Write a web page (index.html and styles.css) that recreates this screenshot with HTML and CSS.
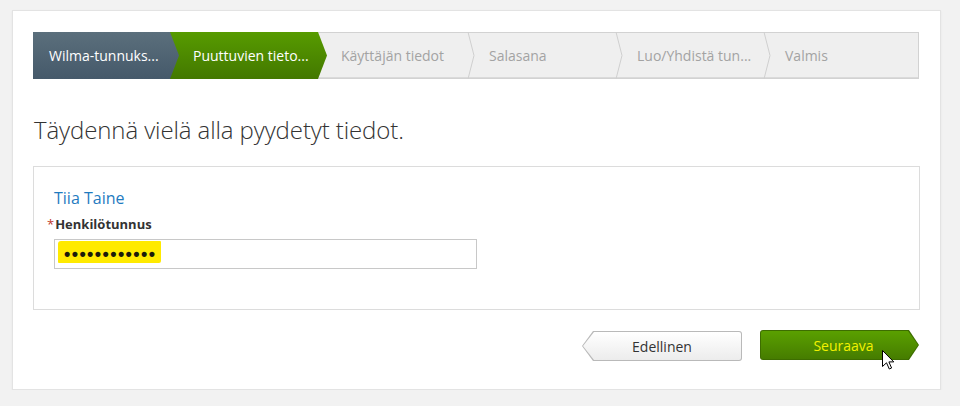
FILE: index.html
```html
<!DOCTYPE html>
<html>
<head>
  <title>Wilma-tunnukset</title>
  <meta name="viewport" content="width=device-width, initial-scale=1.0">
  <link rel="stylesheet" href="styles.css">
</head>
<body>
  <div class="card">
    <div class="stepper">
      <div class="step step-done">Wilma-tunnuks...</div>
      <div class="step step-active">Puuttuvien tieto...</div>
      <div class="step step-todo">
        <span>Käyttäjän tiedot</span>
        <svg class="sep" viewBox="0 0 8 47"><polyline points="1,0 7,23.5 1,47" /></svg>
      </div>
      <div class="step step-todo">
        <span>Salasana</span>
        <svg class="sep" viewBox="0 0 8 47"><polyline points="1,0 7,23.5 1,47" /></svg>
      </div>
      <div class="step step-todo">
        <span>Luo/Yhdistä tun...</span>
        <svg class="sep" viewBox="0 0 8 47"><polyline points="1,0 7,23.5 1,47" /></svg>
      </div>
      <div class="step step-todo step-last">
        <span>Valmis</span>
      </div>
    </div>

    <h1 class="title">Täydennä vielä alla pyydetyt tiedot.</h1>

    <div class="panel">
      <h3 class="person">Tiia Taine</h3>
      <label class="field-label"><span class="req">*</span>Henkilötunnus</label>
      <div class="field">
        <span class="mark">••••••••••••</span>
      </div>
    </div>

    <div class="actions">
      <a class="btn-prev"><span class="btn-face">Edellinen</span></a>
      <a class="btn-next"><span class="btn-face">Seuraava</span></a>
      <!-- mouse pointer over the next button -->
      <svg class="cursor" viewBox="0 0 13 20" width="13" height="20">
        <path d="M0.5,0.5 L0.5,16.5 L4.5,12.8 L7.3,19 L9.6,18 L6.9,11.9 L11.8,11.9 Z" />
      </svg>
    </div>
  </div>
</body>
</html>
```

FILE: styles.css
```css
body {
  margin: 0;
  padding: 10px 19px 0 12px;
  background: #f2f2f2;
  font-family: "Open Sans", "Liberation Sans", sans-serif;
  color: #333;
}

.card {
  background: #fff;
  border: 1px solid #e3e3e3;
  box-shadow: 0 1px 2px rgba(0, 0, 0, 0.06);
  padding: 21px 20px 28px 20px;
  height: 380px;
  box-sizing: border-box;
}

/* wizard steps */
.stepper {
  display: flex;
  height: 47px;
  margin-right: 1px;
  background: #efefef;
  box-shadow: inset 0 0 0 1px #d2d2d2, inset 0 -2px 0 #dadada;
  font-size: 14px;
}

.step {
  display: flex;
  align-items: center;
  box-sizing: border-box;
  white-space: nowrap;
  position: relative;
}

.step-done {
  flex: 0 0 146px;
  padding-left: 16px;
  color: #fff;
  background: linear-gradient(#5b6f7c, #45596a);
  clip-path: polygon(0 0, calc(100% - 9px) 0, 100% 50%, calc(100% - 9px) 100%, 0 100%);
  z-index: 3;
}

.step-active {
  flex: 0 0 157px;
  margin-left: -9px;
  padding-left: 23px;
  color: #fff;
  background: linear-gradient(#579b00, #437800);
  clip-path: polygon(0 0, calc(100% - 9px) 0, 100% 50%, calc(100% - 9px) 100%, 0 100%);
  z-index: 2;
}

.step-todo {
  flex: 0 0 148px;
  padding-left: 14px;
  color: #a3a3a3;
}

.step-last {
  flex: 1;
}

.sep {
  margin-left: auto;
  width: 8px;
  height: 47px;
  flex: none;
}

.sep polyline {
  fill: none;
  stroke: #cfcfcf;
  stroke-width: 1;
}

.title {
  margin: 36px 0 21px 1px;
  font-size: 24px;
  font-weight: 300;
  line-height: 30px;
  letter-spacing: -0.1px;
  color: #333;
}

/* form panel */
.panel {
  border: 1px solid #dcdcdc;
  padding: 20px 20px 40px 20px;
}

.person {
  margin: 0 0 6px 0;
  font-size: 16px;
  font-weight: 400;
  line-height: 22px;
  color: #1f7bbf;
}

.field-label {
  display: block;
  font-size: 13px;
  font-weight: 700;
  line-height: 18px;
  color: #333;
  margin-bottom: 6px;
}

.req {
  color: #c0392b;
  font-weight: 400;
  margin-left: -7px;
  margin-right: 1px;
}

.field {
  width: 423px;
  height: 30px;
  border: 1px solid #c8c8c8;
  box-sizing: border-box;
  padding: 1px 0 0 3px;
}

.mark {
  display: inline-block;
  width: 103px;
  height: 22px;
  background: #ffea00;
  border-radius: 3px 1px 2px 1px;
  font-family: "Liberation Sans", sans-serif;
  font-size: 18px;
  font-weight: 700;
  line-height: 26px;
  letter-spacing: 1.4px;
  padding-left: 6px;
  box-sizing: border-box;
  color: #1a1a0a;
  overflow: hidden;
}

/* buttons */
.actions {
  display: flex;
  justify-content: flex-end;
  gap: 18px;
  margin-top: 20px;
  position: relative;
}

.btn-prev,
.btn-next {
  display: block;
  height: 30px;
  box-sizing: border-box;
  padding: 1px;
  font-size: 14px;
  cursor: pointer;
}

.btn-prev {
  width: 160px;
  margin-top: 1px;
  background: #b9b9b9;
  border-radius: 0 3px 3px 0;
  clip-path: polygon(11px 0, 100% 0, 100% 100%, 11px 100%, 0 50%);
}

.btn-prev .btn-face {
  background: linear-gradient(#ffffff, #ececec);
  color: #333;
  border-radius: 0 2px 2px 0;
  clip-path: polygon(11px 0, 100% 0, 100% 100%, 11px 100%, 0 50%);
}

.btn-next {
  width: 159px;
  margin-right: 1px;
  background: #3d6d00;
  border-radius: 3px 0 0 3px;
  clip-path: polygon(0 0, calc(100% - 10px) 0, 100% 50%, calc(100% - 10px) 100%, 0 100%);
}

.btn-next .btn-face {
  background: linear-gradient(#5aa000, #467c00);
  color: #f2f200;
  border-radius: 2px 0 0 2px;
  clip-path: polygon(0 0, calc(100% - 10px) 0, 100% 50%, calc(100% - 10px) 100%, 0 100%);
  padding-left: 8px;
}

.btn-face {
  display: flex;
  align-items: center;
  justify-content: center;
  height: 100%;
  box-sizing: border-box;
}

.cursor {
  position: absolute;
  right: 25px;
  top: 20px;
}

.cursor path {
  fill: #fff;
  stroke: #000;
  stroke-width: 1;
}
```
